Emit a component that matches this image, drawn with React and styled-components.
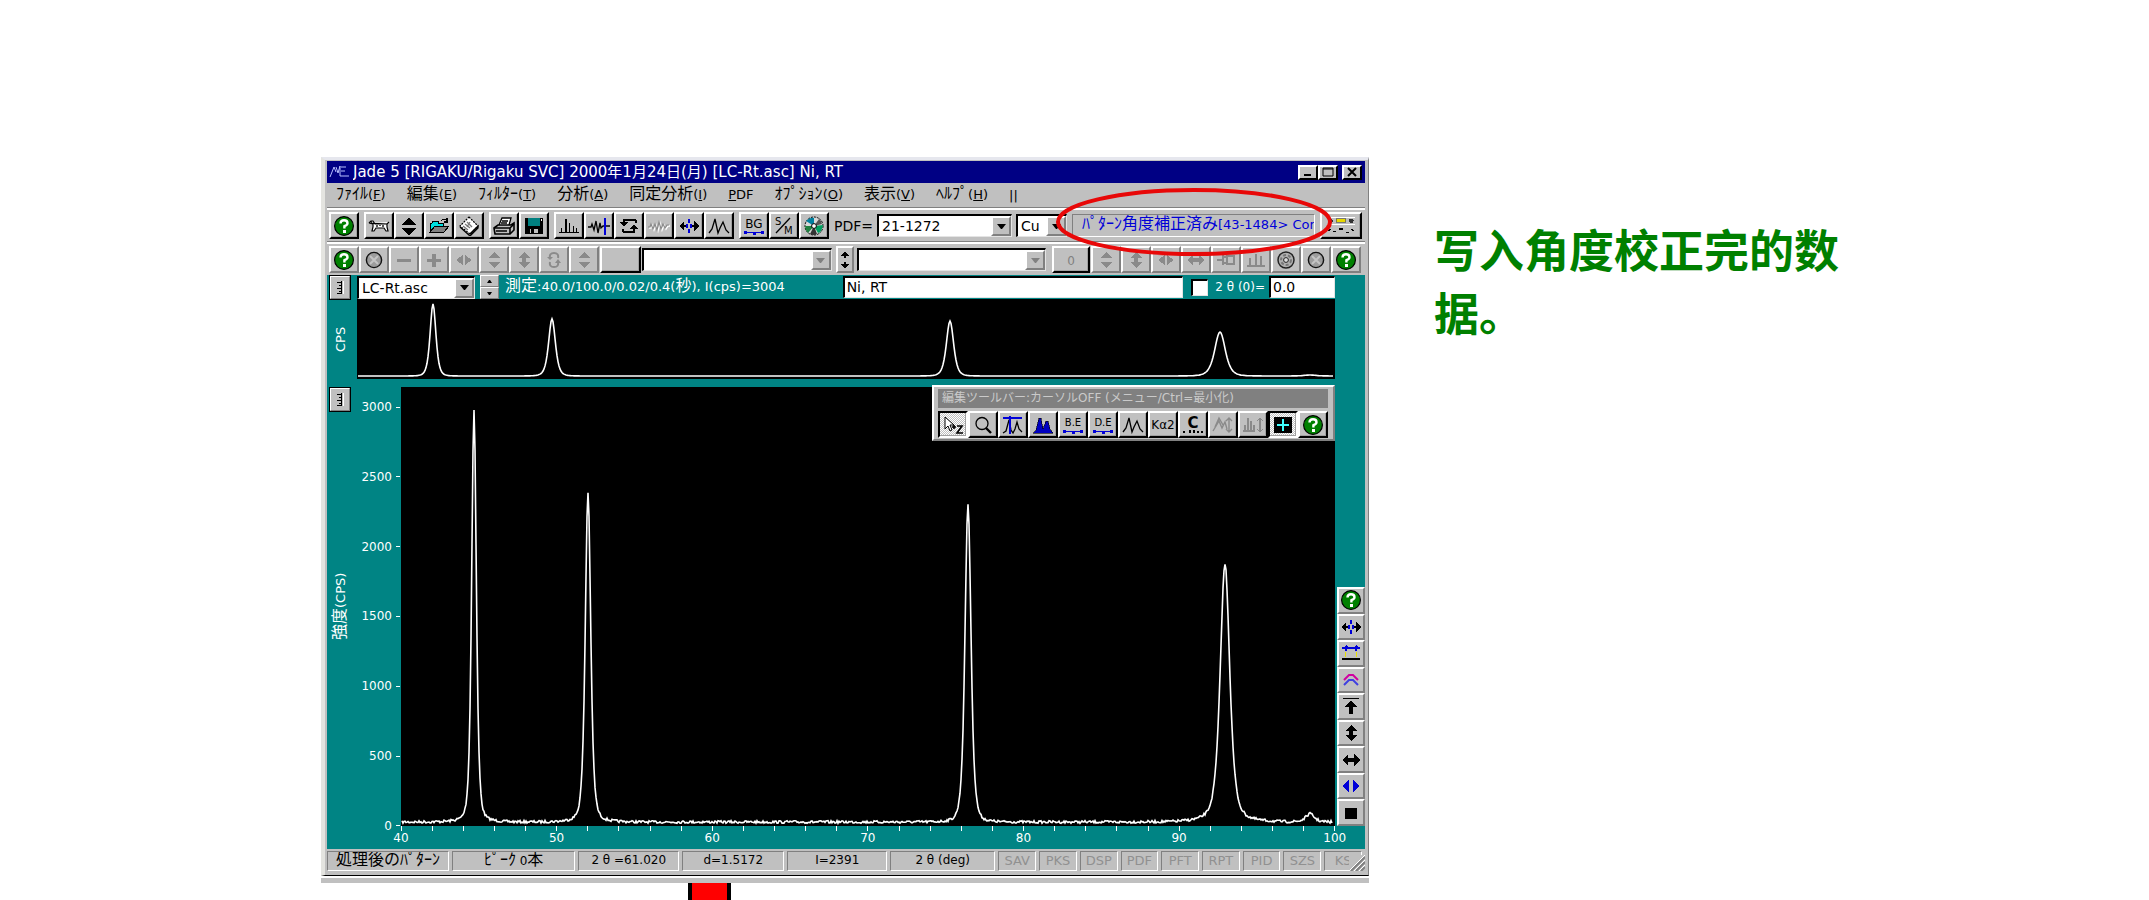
import React, { useState } from 'react';
import styled, { createGlobalStyle, css } from 'styled-components';

const gray = '#c0c0c0';
const dark = '#808080';
const teal = '#008484';
const navy = '#000084';
const blue = '#0000d8';

const GlobalStyle = createGlobalStyle`
  *, *::before, *::after { box-sizing: border-box; }
  body {
    margin: 0;
    background: #fff;
    color: #000;
    font-family: "DejaVu Sans", "Noto Sans CJK JP", sans-serif;
    font-size: 13px;
  }
  button, select, input { font: inherit; color: inherit; border-radius: 0; }
`;

const raised = css`
  border: 2px solid;
  border-color: #fff ${dark} ${dark} #fff;
`;

const Page = styled.main`
  display: grid;
  grid-template-columns: minmax(0, 321fr) minmax(0, 1048fr) minmax(0, 65fr) minmax(0, 430fr) minmax(0, 285fr);
  padding-top: 157px;
  overflow: hidden;
`;

const Desk = styled.section`
  grid-column: 2;
  min-width: 0;
`;

const Frame = styled.div`
  background: ${gray};
  padding: 1px 3px 3px 2px;
  border-top: 3px solid #e6e7ee;
  border-left: 4px solid #e4e4e0;
  border-right: 1px solid ${dark};
  border-bottom: 1px solid #000;
`;

const Shelf = styled.div`
  height: 7px;
  background: ${gray};
  border-top: 2px solid #fff;
`;

const RedMark = styled.div`
  width: 43px;
  height: 17px;
  margin-left: 35%;
  background: #ff0000;
  border: solid #000;
  border-width: 0 4px;
`;

const Note = styled.p`
  grid-column: 4;
  margin: 60px 0 0;
  color: #008000;
  font-family: "Noto Sans CJK SC", sans-serif;
  font-size: 45px;
  font-weight: 700;
  line-height: 63px;
`;

/* title bar + menu */

const TitleBar = styled.header`
  display: flex;
  align-items: center;
  height: 22px;
  padding: 0 3px 0 2px;
  background: ${navy};
  color: #fff;
`;

const Title = styled.h1`
  flex: 1;
  margin: 0 0 0 4px;
  font-size: 15px;
  line-height: 22px;
  font-weight: 400;
  white-space: nowrap;
  overflow: hidden;
`;

const Jp = styled.span`
  font-size: 16px;
  line-height: 16px;
`;

const WinButton = styled.button`
  display: grid;
  place-items: center;
  width: 20px;
  height: 15px;
  padding: 0;
  margin-left: ${p => (p.$apart ? 4 : 0)}px;
  background: ${gray};
  ${raised}
  border-right-color: #000;
  border-bottom-color: #000;
`;

const MenuBar = styled.nav`
  display: flex;
  align-items: center;
  gap: 21px;
  height: 24px;
  padding-left: 9px;
`;

const MenuItem = styled.button`
  padding: 0;
  border: 0;
  background: none;
  line-height: 20px;
  white-space: nowrap;
`;

/* tool bars */

const ToolBar = styled.div`
  display: flex;
  align-items: center;
  height: 34px;
  padding: 2px 3px 0 2px;
  border-top: 1px solid ${dark};
  box-shadow: inset 0 2px #fff;
`;

const Group = styled.div`
  display: flex;
  margin-right: ${p => p.$after ?? 5}px;
`;

const ToolButton = styled.button`
  display: grid;
  place-items: center;
  flex: none;
  width: ${p => p.$w || 30}px;
  height: 27px;
  padding: 0;
  overflow: hidden;
  background: ${gray};
  color: ${p => (p.disabled ? dark : '#000')};
  ${raised}
  box-shadow: ${p => (p.$flat ? 'none' : 'inset -1px -1px #a0a0a0')};
  ${p => !p.$flat && css`border-right-color: #000; border-bottom-color: #000;`}
  ${p => p.$down && css`
    border-color: #000 #fff #fff #000;
    background: repeating-conic-gradient(#fff 0 25%, ${gray} 0 50%) 0 0 / 2px 2px;
  `}
  svg { display: block; shape-rendering: crispEdges; }
`;

const ComboBox = styled.span`
  display: grid;
  flex: ${p => p.$grow || 'none'};
  width: ${p => (p.$w ? p.$w + 'px' : 'auto')};
  min-width: 0;
  height: 23px;
  margin-right: ${p => p.$after || 4}px;
  color: #000;
  background: #fff;
  border: solid;
  border-width: 2px 1px 1px 2px;
  border-color: #000 #e4e4e4 #e4e4e4 #000;

  > * { grid-area: 1 / 1; }

  select {
    appearance: none;
    width: 100%;
    min-width: 0;
    padding: 0 20px 0 3px;
    border: 0;
    background: none;
    font-size: 14px;
    opacity: 1;
  }
`;

const Arrow = styled.span`
  display: grid;
  place-items: center;
  justify-self: end;
  width: 20px;
  background: ${gray};
  pointer-events: none;
  ${raised}
`;

const Label = styled.label`
  margin-right: 4px;
  font-size: ${p => p.$size || 14}px;
  white-space: nowrap;
`;

const StateBox = styled.div`
  position: relative;
  flex: none;
  width: 243px;
  height: 23px;
  margin-right: 5px;
  border: 1px solid;
  border-color: ${dark} #fff #fff ${dark};
  color: ${blue};
`;

const StateText = styled.div`
  padding-left: 9px;
  line-height: 20px;
  white-space: nowrap;
  overflow: hidden;
`;

const Ring = styled.svg`
  position: absolute;
  z-index: 3;
  left: -18px;
  top: -28px;
  width: 278px;
  height: 70px;
  pointer-events: none;
`;

/* teal work area */

const Work = styled.div`
  display: grid;
  grid-template-columns: 30px minmax(0, 1fr) 30px;
  grid-template-rows: 24px 80px 8px 439px 23px;
  background: ${teal};
  color: #fff;
`;

const InfoRow = styled.div`
  display: flex;
  grid-column: 2;
  align-items: center;
`;

const Spin = styled.div`
  display: grid;
  width: 19px;
  height: 24px;
  margin: 0 6px 0 4px;
`;

const SpinButton = styled.button`
  display: grid;
  place-items: center;
  padding: 0;
  background: ${gray};
  ${raised}
  border-width: 1px;
`;

const Measure = styled.span`
  flex: 341;
  min-width: 0;
  overflow: hidden;
  line-height: 22px;
  white-space: nowrap;
`;

const TextBox = styled.input`
  flex: ${p => p.$grow || 'none'};
  width: ${p => p.$w || 0}px;
  min-width: 0;
  height: 22px;
  padding: 0 2px 2px;
  color: #000;
  background: #fff;
  border: solid;
  border-width: 2px 1px 1px 2px;
  border-color: #000 #e4e4e4 #e4e4e4 #000;
  font-size: 14px;
`;

const Tick = styled.input`
  appearance: none;
  width: 17px;
  height: 17px;
  margin: 0 7px 0 8px;
  background: #fff;
  border: solid;
  border-width: 2px 1px 1px 2px;
  border-color: #000 #e4e4e4 #e4e4e4 #000;
  &:checked { background: ${navy}; }
`;

const Side = styled.div`
  display: flex;
  flex-direction: column;
  align-items: center;
  grid-column: 1;
  grid-row: ${p => p.$rows};
  padding: 0 4px ${p => p.$foot || 0}px 0;
`;

const RulerButton = styled.button`
  display: grid;
  place-items: center;
  width: 22px;
  height: 25px;
  padding: 0;
  background: ${gray};
  ${raised}
  outline: 1px solid #000;
  outline-offset: -1px;
`;

const Upright = styled.span`
  flex: 1;
  display: flex;
  align-items: center;
  justify-content: center;
  writing-mode: vertical-rl;
  text-orientation: sideways;
  transform: rotate(180deg);
`;

const Overview = styled.div`
  grid-column: 2;
  grid-row: 2;
  background: #000;
`;

const Trace = styled.svg`
  display: block;
  width: 100%;
  height: 100%;
  path {
    fill: none;
    stroke: #fff;
    stroke-width: 1.6;
    vector-effect: non-scaling-stroke;
  }
`;

const Scale = styled.div`
  grid-column: 2;
  grid-row: 4;
  display: grid;
  grid-template-columns: 44px minmax(0, 1fr);
`;

const YAxis = styled.div`
  display: flex;
  flex-direction: column;
  justify-content: space-between;
  padding-top: 20px;
  font-size: 12px;
`;

const YMark = styled.div`
  display: flex;
  align-items: center;
  justify-content: flex-end;
  gap: 4px;
  height: 0;
  padding-right: 1px;
  &::after {
    content: "";
    width: 4px;
    height: 1px;
    background: #fff;
  }
`;

const Plot = styled.div`
  position: relative;
  background: #000;
`;

const XAxis = styled.div`
  grid-column: 2;
  grid-row: 5;
  display: flex;
  justify-content: space-between;
  padding-left: 44px;
  font-size: 12px;
`;

const XMark = styled.div`
  display: flex;
  flex-direction: column;
  align-items: center;
  width: 0;
  line-height: 14px;
  &::before {
    content: "";
    flex: none;
    width: 1px;
    height: 5px;
    background: #fff;
  }
`;

const SideTools = styled.div`
  grid-column: 3;
  grid-row: 4;
  align-self: end;
  display: grid;
  height: 239px;
  padding-left: 2px;
  button { height: auto; }
`;

const Floating = styled.div`
  position: absolute;
  z-index: 2;
  top: -2px;
  right: 0;
  padding: 2px 5px 1px 4px;
  background: ${gray};
  ${raised}
`;

const FloatTitle = styled.div`
  height: 19px;
  margin-bottom: 3px;
  padding-left: 4px;
  background: ${dark};
  color: #cacaca;
  font-size: 12px;
  line-height: 18px;
  white-space: nowrap;
`;

/* status bar */

const StatusBar = styled.footer`
  display: flex;
  gap: 3px;
  padding: 2px 0 1px;
`;

const Slot = styled.div`
  flex: ${p => p.$grow} 1 0;
  min-width: 0;
  height: 20px;
  border: 1px solid;
  border-color: ${dark} #fff #fff ${dark};
  color: ${p => (p.$off ? '#909090' : '#000')};
  font-size: ${p => (p.$off ? 13 : 12)}px;
  line-height: 17px;
  text-align: center;
  white-space: nowrap;
  overflow: hidden;
`;

const Grip = styled.svg`
  flex: none;
  width: 16px;
  height: 16px;
  margin: 4px 0 0 -16px;
  background: ${gray};
`;

/* ---------- icons, all on a 24 x 20 grid ---------- */

const ghost = { fill: 'none', stroke: '#8a8a8a', strokeWidth: 1.4 };
const line = { fill: 'none', stroke: '#000', strokeWidth: 1.3 };
const round = { shapeRendering: 'auto' };

const shapes = {
  help: (
    <g {...round}>
      <circle cx="12" cy="10" r="9.4" fill="#008000" stroke="#000" strokeWidth="1.2" />
      <path d="M8.5 7.5Q8.5 4.2 12 4.2T15.5 7.2Q15.5 9 12.4 10.2V12.4" fill="none" stroke="#fff" strokeWidth="2.4" />
      <rect x="11" y="14" width="3" height="3" fill="#fff" />
    </g>
  ),
  dog: (
    <g {...round}>
      <path d="M2 7L4 5H6L8 8H17L20 8L22 6M20 8L20 11L21 15H19L17 12H9L7 15H5L6 11L6 8L2 7Z" fill="#fff" stroke="#000" strokeWidth="1.2" />
      <path d="M10 9V11M13 9V10M16 9V11M4 6H5" {...line} />
    </g>
  ),
  upDown: <path d="M12 2L20 9H4ZM4 12H20L12 19Z" fill="#000" />,
  open: (
    <g>
      <path d="M3 16V7H5L6 5H11V7H16V10H8Z" fill="#00e0e0" stroke="#000" />
      <path d="M3 16L8 10H22L17 16Z" fill={dark} stroke="#000" />
      <path d="M14 5Q17 1 20 5M20 2V6H17" {...line} />
    </g>
  ),
  book: (
    <g {...round}>
      <path d="M12 1L21 10L13 18L3 10Z" fill="#fff" stroke="#000" strokeWidth="1.2" strokeDasharray="2 1" />
      <path d="M13 18L21 10V12L13 20L3 11" {...line} />
      <path d="M8 8L13 12M10 6L15 11M13 6L10 11M6 10L11 14" stroke="#777" strokeWidth="1.3" fill="none" />
    </g>
  ),
  print: (
    <g {...round}>
      <path d="M7 9L10 2H19L17 9" fill="#fff" stroke="#000" strokeWidth="1.3" />
      <path d="M10 5H16M9 7H15" {...line} />
      <path d="M2 12L6 9H19L22 7V14L18 18H3Z" fill={gray} stroke="#000" strokeWidth="1.6" />
      <path d="M2 12H18V18M18 12L22 8M4 15H15" {...line} strokeWidth="1.6" />
    </g>
  ),
  save: (
    <g>
      <rect x="3" y="2" width="18" height="16" fill="#000" />
      <rect x="6" y="2" width="12" height="8" fill="#008080" />
      <rect x="8" y="13" width="8" height="4" fill={gray} />
      <rect x="9" y="13" width="3" height="4" fill="#000" />
      <rect x="19" y="3" width="1" height="2" fill="#fff" />
    </g>
  ),
  sticks: <path d="M2 16H22V17H2ZM4 12H5V16H4ZM8 3H10V16H8ZM12 7H13V16H12ZM16 10H17V16H16ZM19 12H20V16H19Z" fill="#000" />,
  waveBar: (
    <g>
      <path d="M1 11H4L5 8L7 14L9 5L11 17L13 7L14 12L16 10H23" {...line} {...round} />
      <rect x="17" y="2" width="2" height="17" fill={blue} />
    </g>
  ),
  cycle: (
    <g>
      <path d="M19 4H7V9M6 16H17V10M19 4V7M6 16V13" {...line} strokeWidth="1.6" />
      <path d="M3 6H11L7 11ZM13 13H21L17 8Z" fill="#000" />
    </g>
  ),
  noise: (
    <g {...round}>
      <path d="M2 12H4L5 9L7 14L9 9L11 15L13 7L15 14L17 9L19 13L21 10H23" fill="none" stroke="#fff" strokeWidth="1.4" />
      <path d="M1 11H3L4 8L6 13L8 8L10 14L12 6L14 13L16 8L18 12L20 9H22" {...ghost} strokeWidth="1.2" />
    </g>
  ),
  spread: (
    <g>
      <path d="M2 10L7 5V9H9V11H7V15ZM22 10L17 5V9H15V11H17V15Z" fill="#000" />
      <path d="M11 3H13V7H11ZM11 13H13V17H11ZM9 8H11V12H9ZM13 8H15V12H13Z" fill={blue} />
    </g>
  ),
  peaks: <path d="M2 17L5 13L8 3L11 17L13 12L16 6L19 14L22 17" {...line} {...round} />,
  disc: (
    <g {...round}>
      <circle cx="12" cy="10" r="9" fill="#d8d8d8" stroke="#000" strokeDasharray="2 1" />
      <path d="M12 10L4 5Q8 1 12 2Z" fill="#0080a0" />
      <path d="M12 10L21 9Q20 16 16 17Z" fill="#00a060" />
      <path d="M12 10L6 17Q3 14 3 10Z" fill="#208040" />
      <path d="M12 10L17 3Q20 5 20 8Z" fill="#555" />
      <path d="M12 10L8 18Q12 20 15 18Z" fill="#333" />
      <circle cx="12" cy="10" r="2.4" fill="#fff" stroke="#000" />
    </g>
  ),
  cancel: (
    <g {...round}>
      <circle cx="12" cy="10" r="7.6" fill="#9c9c9c" stroke="#111" strokeWidth="1.4" />
      <path d="M8 6L16 14M16 6L8 14" stroke="#c4c4c4" strokeWidth="2" />
    </g>
  ),
  reel: (
    <g {...round}>
      <circle cx="12" cy="10" r="8" fill="#b0b0b0" stroke="#222" strokeWidth="1.5" />
      <circle cx="12" cy="10" r="5" fill="none" stroke="#777" strokeDasharray="3 2" strokeWidth="2" />
      <circle cx="12" cy="10" r="2.4" fill="#ddd" stroke="#222" />
    </g>
  ),
  minus: <path d="M5 9H19V12H5Z" fill="#8a8a8a" />,
  plus: <path d="M5 9H10V4H14V9H19V12H14V17H10V12H5Z" fill="#8a8a8a" />,
  gLeftRight: <path d="M4 10L11 5V15ZM20 10L13 5V15Z" fill="#8a8a8a" />,
  gWide: <path d="M3 10L9 5V8H15V5L21 10L15 15V12H9V15Z" fill="#8a8a8a" />,
  gUpDown: <path d="M12 2L18 8H6ZM6 12H18L12 18Z" fill="#8a8a8a" />,
  gTall: <path d="M12 2L18 8H14V12H18L12 18L6 12H10V8H6Z" fill="#8a8a8a" />,
  gCycle: (
    <g {...round}>
      <path d="M8 8Q7 3 12 3T16 8M8 12Q7 17 12 17T16 12" {...ghost} strokeWidth="2" />
      <path d="M5 7H11L8 10ZM13 13H19L16 9Z" fill="#8a8a8a" />
    </g>
  ),
  gPin: <path d="M3 10H9M9 5V15M9 7H13V13H9M13 6H20V14H13Z" {...ghost} strokeWidth="2" />,
  gSticks: <path d="M3 16H21M6 16V8M12 16V4M17 16V6" {...ghost} strokeWidth="2" />,
  gPeaks: <path d="M2 16L8 6L11 13L14 7L16 14M4 12L8 3L12 10M18 3V17M15 6L18 3L21 6M15 14L18 17L21 14" {...ghost} {...round} />,
  gBars: <path d="M2 16H14M4 16V10M7 16V3M10 16V6M13 16V10M19 3V17M16 6L19 3L22 6M16 14L19 17L22 14" {...ghost} />,
  pointer: (
    <g {...round}>
      <path d="M4 2V14L7 11L9 16L11 15L9 10H13Z" fill="#fff" stroke="#000" />
      <path d="M11 12H15M13 10V14M16 11H21L16 18H22" {...line} strokeWidth="1.6" />
    </g>
  ),
  lens: (
    <g {...round}>
      <circle cx="11" cy="8.5" r="6" {...line} />
      <path d="M15 13L20 18" stroke="#000" strokeWidth="2.4" />
    </g>
  ),
  peakBar: (
    <g>
      <path d="M2 18L5 16L8 5L10 15L12 18L14 14L16 7L18 14L21 17" {...line} {...round} />
      <path d="M2 2H21V4H2ZM8 1H10V19H8Z" fill={blue} />
    </g>
  ),
  area: <path d="M2 18L5 15L8 3H10L12 14L15 6H17L19 14L22 18Z" fill="#0000c0" stroke="#000" strokeWidth=".6" />,
  cross: (
    <g>
      <rect x="3" y="2" width="18" height="16" fill="#000" />
      <path d="M12 4V16M6 10H18" stroke="#40ffff" strokeWidth="2" />
    </g>
  ),
  leveler: (
    <g>
      <path d="M3 6L7 2L11 6ZM13 6L17 2L21 6Z" fill={blue} />
      <path d="M3 4H21V6H3ZM6 6H8V8H6ZM16 6H18V8H16Z" fill={blue} />
      <path d="M6 9H7V14H6ZM17 9H18V14H17Z" fill="#e8e000" />
      <rect x="3" y="15" width="18" height="2" fill="#000" />
    </g>
  ),
  chevrons: (
    <g fill="none" {...round}>
      <path d="M5 10L10 5H14L19 10" stroke="#d000a0" strokeWidth="2" />
      <path d="M5 15L10 10H14L19 15" stroke="#4040e0" strokeWidth="2" />
    </g>
  ),
  toTop: <path d="M4 2H20V3H4ZM12 5L19 11H14V18H10V11H5Z" fill="#000" />,
  tall: <path d="M12 2L18 8H14V12H18L12 18L6 12H10V8H6Z" fill="#000" />,
  wide: <path d="M3 10L9 4V8H15V4L21 10L15 16V12H9V16Z" fill="#000" />,
  blueSides: <path d="M3 10L10 4V16ZM21 10L14 4V16Z" fill={blue} />,
  stop: <rect x="6" y="5" width="12" height="11" fill="#000" />,
  blank: null,
  machine: (
    <g>
      <path d="M0 3H24M0 9H24" stroke="#fff" />
      <circle cx="3" cy="6" r="2" fill="#333" />
      <circle cx="21" cy="6" r="2" fill="#333" />
      <rect x="8" y="4" width="8" height="3" fill="#e8d800" stroke="#555" strokeWidth=".6" />
      <path d="M1 15L3 13M5 15H8M10 13H14M16 16H19M21 13L23 15" {...line} strokeWidth="1" />
    </g>
  ),
};

// lettered buttons, some with the blue base line under them
const baseLine = (
  <g fill={blue}>
    <path d="M2 16H22V17H2Z" />
    <rect x="2" y="15" width="3" height="3" />
    <rect x="11" y="16" width="3" height="3" />
    <rect x="19" y="15" width="3" height="3" />
  </g>
);

const lettered = {
  bg: [<text x="12" y="12" textAnchor="middle" fontSize="12">BG</text>, baseLine],
  be: [<text x="12" y="11" textAnchor="middle" fontSize="10">B.E</text>, baseLine],
  de: [<text x="12" y="11" textAnchor="middle" fontSize="10">D.E</text>, baseLine],
  sm: [
    <text x="3" y="9" fontSize="10">S</text>,
    <text x="12" y="18" fontSize="10">M</text>,
    <path d="M4 17L18 2" {...line} {...round} />,
  ],
  ka: [<text x="12" y="14" textAnchor="middle" fontSize="12">Kα2</text>],
  c: [
    <text x="12" y="13" textAnchor="middle" fontSize="15" fontWeight="700">C</text>,
    <path d="M3 16V18M9 15V18M13 15V18M17 16V18M21 16V18" {...line} />,
  ],
  zero: [<text x="12" y="15" textAnchor="middle" fontSize="12" fill={dark}>0</text>],
};

function Icon({ name, w = 24, h = 20 }) {
  const letters = lettered[name];
  return (
    <svg width={w} height={h} viewBox="0 0 24 20" aria-hidden="true">
      {letters ? letters.map((part, i) => <g key={i}>{part}</g>) : shapes[name]}
    </svg>
  );
}

function Tools({ names, w, flat, off, after }) {
  return (
    <Group $after={after}>
      {names.map((name, i) => (
        <ToolButton key={name + i} type="button" aria-label={name} $w={w} $flat={flat} disabled={off && name !== 'help'}>
          <Icon name={name} />
        </ToolButton>
      ))}
    </Group>
  );
}

function Combo({ id, label, options, off, ...rest }) {
  return (
    <ComboBox {...rest}>
      <select id={id} aria-label={label} disabled={off}>
        {options.map(o => <option key={o}>{o}</option>)}
      </select>
      <Arrow>
        <svg width="9" height="5" aria-hidden="true">
          <path d="M0 0H9L5 5H4Z" fill={off ? dark : '#000'} />
        </svg>
      </Arrow>
    </ComboBox>
  );
}

function Ruler() {
  return (
    <RulerButton type="button" aria-label="scale">
      <svg width="10" height="15" aria-hidden="true" shapeRendering="crispEdges">
        <path d="M6 1V14M2 2H6M4 5H6M2 8H6M4 11H6M2 13H6" stroke="#000" fill="none" />
        <path d="M8 1V14" stroke="#fff" />
      </svg>
    </RulerButton>
  );
}

/* ---------- diffraction trace ---------- */

function makeTrace(width, base, peaks, noise) {
  let seed = 7;
  let d = '';
  for (let x = 1; x < width; x++) {
    seed = (seed * 16807) % 2147483647;
    let y = 0;
    peaks.forEach(([center, height, spread]) => {
      y += height / Math.pow(1 + Math.pow((x - center) / spread, 2), 2.5);
    });
    const jitter = (seed / 2147483647 - 0.5) * noise;
    d += `${x === 1 ? 'M' : 'L'}${x} ${(base - y + jitter).toFixed(1)}`;
  }
  return d;
}

const mainTrace = makeTrace(932, 435, [
  [73, 408, 4.8], [73, 5, 26], [187, 325, 5.6], [187, 5, 28], [567, 3, 28],
  [567, 315, 6.2], [824, 251, 9.7], [824, 7, 42], [909, 8, 9],
], 2.6);

const smallTrace = makeTrace(977, 77, [
  [76, 72, 6], [195, 57, 7], [593, 55, 7.5], [863, 44, 11], [953, 1, 12],
], 0);

const menus = [
  ['ﾌｧｲﾙ', 'F'], ['編集', 'E'], ['ﾌｨﾙﾀｰ', 'T'], ['分析', 'A'], ['同定分析', 'I'],
  ['PDF'], ['ｵﾌﾟｼｮﾝ', 'O'], ['表示', 'V'], ['ﾍﾙﾌﾟ', 'H'],
];

const flags = ['SAV', 'PKS', 'DSP', 'PDF', 'PFT', 'RPT', 'PID', 'SZS', 'KS'];

const editTools = ['pointer', 'lens', 'peakBar', 'area', 'be', 'de', 'peaks', 'ka', 'c', 'gPeaks', 'gBars', 'cross', 'help'];

const sideTools = ['help', 'spread', 'leveler', 'chevrons', 'toTop', 'tall', 'wide', 'blueSides', 'stop'];

function App() {
  const [sample, setSample] = useState('Ni, RT');
  const [offset, setOffset] = useState('0.0');
  const [shift, setShift] = useState(false);

  const xMarks = [];
  for (let deg = 40; deg <= 100; deg += 2) xMarks.push(deg);

  return (
    <>
      <GlobalStyle />
      <Page>
        <Desk>
          <Frame>
            <TitleBar>
              <svg width="20" height="16" fill="none" stroke="#b8c0ff" aria-hidden="true">
                <path d="M1 13L5 3L7 8M7 3L9 9L11 2V12L20 12M12 3H17M12 7H16" />
              </svg>
              <Title>
                Jade 5 [RIGAKU/Rigaku SVC] 2000年1月24日(月) [LC-Rt.asc] Ni, RT
              </Title>
              <WinButton type="button" aria-label="minimize">
                <svg width="12" height="10"><path d="M2 8H9" stroke="#000" strokeWidth="2" /></svg>
              </WinButton>
              <WinButton type="button" aria-label="maximize">
                <svg width="12" height="10"><path d="M1 1H11V9H1ZM1 2H11" stroke="#000" fill="none" /></svg>
              </WinButton>
              <WinButton type="button" aria-label="close" $apart>
                <svg width="12" height="10"><path d="M2 1L10 9M10 1L2 9" stroke="#000" strokeWidth="2" /></svg>
              </WinButton>
            </TitleBar>

            <MenuBar>
              {menus.map(([text, key]) => (
                <MenuItem key={text} type="button">
                  {key ? <><Jp>{text}</Jp>(<u>{key}</u>)</> : <><u>P</u>DF</>}
                </MenuItem>
              ))}
              <span>||</span>
            </MenuBar>

            <ToolBar>
              <Tools names={['help']} />
              <Tools names={['dog', 'upDown', 'open', 'book']} />
              <Tools names={['print', 'save']} />
              <Tools names={['sticks', 'waveBar', 'cycle', 'noise', 'spread', 'peaks']} />
              <Tools names={['bg', 'sm', 'disc']} />
              <Label htmlFor="pdf">PDF=</Label>
              <Combo id="pdf" options={['21-1272']} $grow="1" />
              <Combo label="anode" options={['Cu']} $w={51} $after={5} />
              <StateBox>
                <StateText><Jp>ﾊﾟﾀｰﾝ角度補正済み</Jp>[43-1484&gt; Cor</StateText>
                <Ring aria-hidden="true">
                  <ellipse cx="50%" cy="50%" rx="136" ry="32" fill="none" stroke="#e80808" strokeWidth="4" />
                </Ring>
              </StateBox>
              <ToolButton type="button" aria-label="instrument" $w={42}>
                <Icon name="machine" w={36} h={23} />
              </ToolButton>
            </ToolBar>

            <ToolBar>
              <Tools names={['help', 'cancel', 'minus', 'plus', 'gLeftRight', 'gUpDown', 'gTall', 'gCycle', 'gUpDown']} flat off after={1} />
              <Tools names={['blank']} w={41} off after={1} />
              <Combo label="phase" options={['']} $grow="1" off />
              <ToolButton type="button" aria-label="swap" $w={18} $flat>
                <svg width="8" height="18"><path d="M4 0L8 5H5V7H3V5H0ZM4 18L8 13H5V11H3V13H0Z" fill="#000" /></svg>
              </ToolButton>
              <Group $after={3} />
              <Combo label="line" options={['']} $grow="1" off $after={6} />
              <Tools names={['zero']} w={38} off after={1} />
              <Tools names={['gUpDown', 'gTall', 'gLeftRight', 'gWide', 'gPin', 'gSticks', 'reel', 'cancel', 'help']} flat off after={1} />
            </ToolBar>

            <Work>
              <Side $rows="1 / 3">
                <Ruler />
                <Upright>CPS</Upright>
              </Side>

              <InfoRow>
                <Combo label="file" options={['LC-Rt.asc']} $w={118} $after={1} />
                <Spin>
                  <SpinButton type="button" aria-label="previous">
                    <svg width="5" height="3"><path d="M0 3H5L3 0H2Z" fill="#000" /></svg>
                  </SpinButton>
                  <SpinButton type="button" aria-label="next">
                    <svg width="5" height="3"><path d="M0 0H5L3 3H2Z" fill="#000" /></svg>
                  </SpinButton>
                </Spin>
                <Measure><Jp>測定</Jp>:40.0/100.0/0.02/0.4(<Jp>秒</Jp>), I(cps)=3004</Measure>
                <TextBox aria-label="sample" $grow="337" value={sample} onChange={e => setSample(e.target.value)} />
                <Tick id="shift" type="checkbox" checked={shift} onChange={e => setShift(e.target.checked)} />
                <Label htmlFor="shift" $size={12}>2 θ (0)=</Label>
                <TextBox aria-label="offset" $w={66} value={offset} onChange={e => setOffset(e.target.value)} />
              </InfoRow>

              <Overview>
                <Trace viewBox="0 0 978 80" preserveAspectRatio="none">
                  <path d={smallTrace} />
                </Trace>
              </Overview>

              <Side $rows="4" $foot={25}>
                <Ruler />
                <Upright><span><Jp>強度</Jp>(CPS)</span></Upright>
              </Side>

              <Scale>
                <YAxis>
                  {[3000, 2500, 2000, 1500, 1000, 500, 0].map(n => <YMark key={n}>{n}</YMark>)}
                </YAxis>
                <Plot>
                  <Trace viewBox="0 0 934 439" preserveAspectRatio="none">
                    <path d={mainTrace} />
                  </Trace>
                  <Floating>
                    <FloatTitle>編集ツールバー:カーソルOFF (メニュー/Ctrl=最小化)</FloatTitle>
                    <Group $after={0}>
                      {editTools.map(name => (
                        <ToolButton
                          key={name}
                          type="button"
                          aria-label={name}
                          $down={name === 'pointer' || name === 'cross'}
                        >
                          <Icon name={name} />
                        </ToolButton>
                      ))}
                    </Group>
                  </Floating>
                </Plot>
              </Scale>

              <SideTools>
                {sideTools.map(name => (
                  <ToolButton key={name} type="button" aria-label={name} $w={28} $flat>
                    <Icon name={name} />
                  </ToolButton>
                ))}
              </SideTools>

              <XAxis>
                {xMarks.map(deg => <XMark key={deg}>{deg % 10 === 0 ? deg : ''}</XMark>)}
              </XAxis>
            </Work>

            <StatusBar>
              <Slot $grow={124}><Jp>処理後のﾊﾟﾀｰﾝ</Jp></Slot>
              <Slot $grow={126}><Jp>ﾋﾟｰｸ</Jp> 0<Jp>本</Jp></Slot>
              <Slot $grow={102}>2 θ =61.020</Slot>
              <Slot $grow={104}>d=1.5172</Slot>
              <Slot $grow={101}>I=2391</Slot>
              <Slot $grow={107}>2 θ (deg)</Slot>
              {flags.map(f => <Slot key={f} $grow={37} $off>{f}</Slot>)}
              <Grip aria-hidden="true">
                <path d="M2 16L16 2M7 16L16 7M12 16L16 12" stroke={dark} strokeWidth="2" />
                <path d="M0 16L16 0M5 16L16 5M10 16L16 10" stroke="#fff" />
              </Grip>
            </StatusBar>
          </Frame>
          <Shelf />
          <RedMark />
        </Desk>
        <Note>写入角度校正完的数据。</Note>
      </Page>
    </>
  );
}

export default App;
